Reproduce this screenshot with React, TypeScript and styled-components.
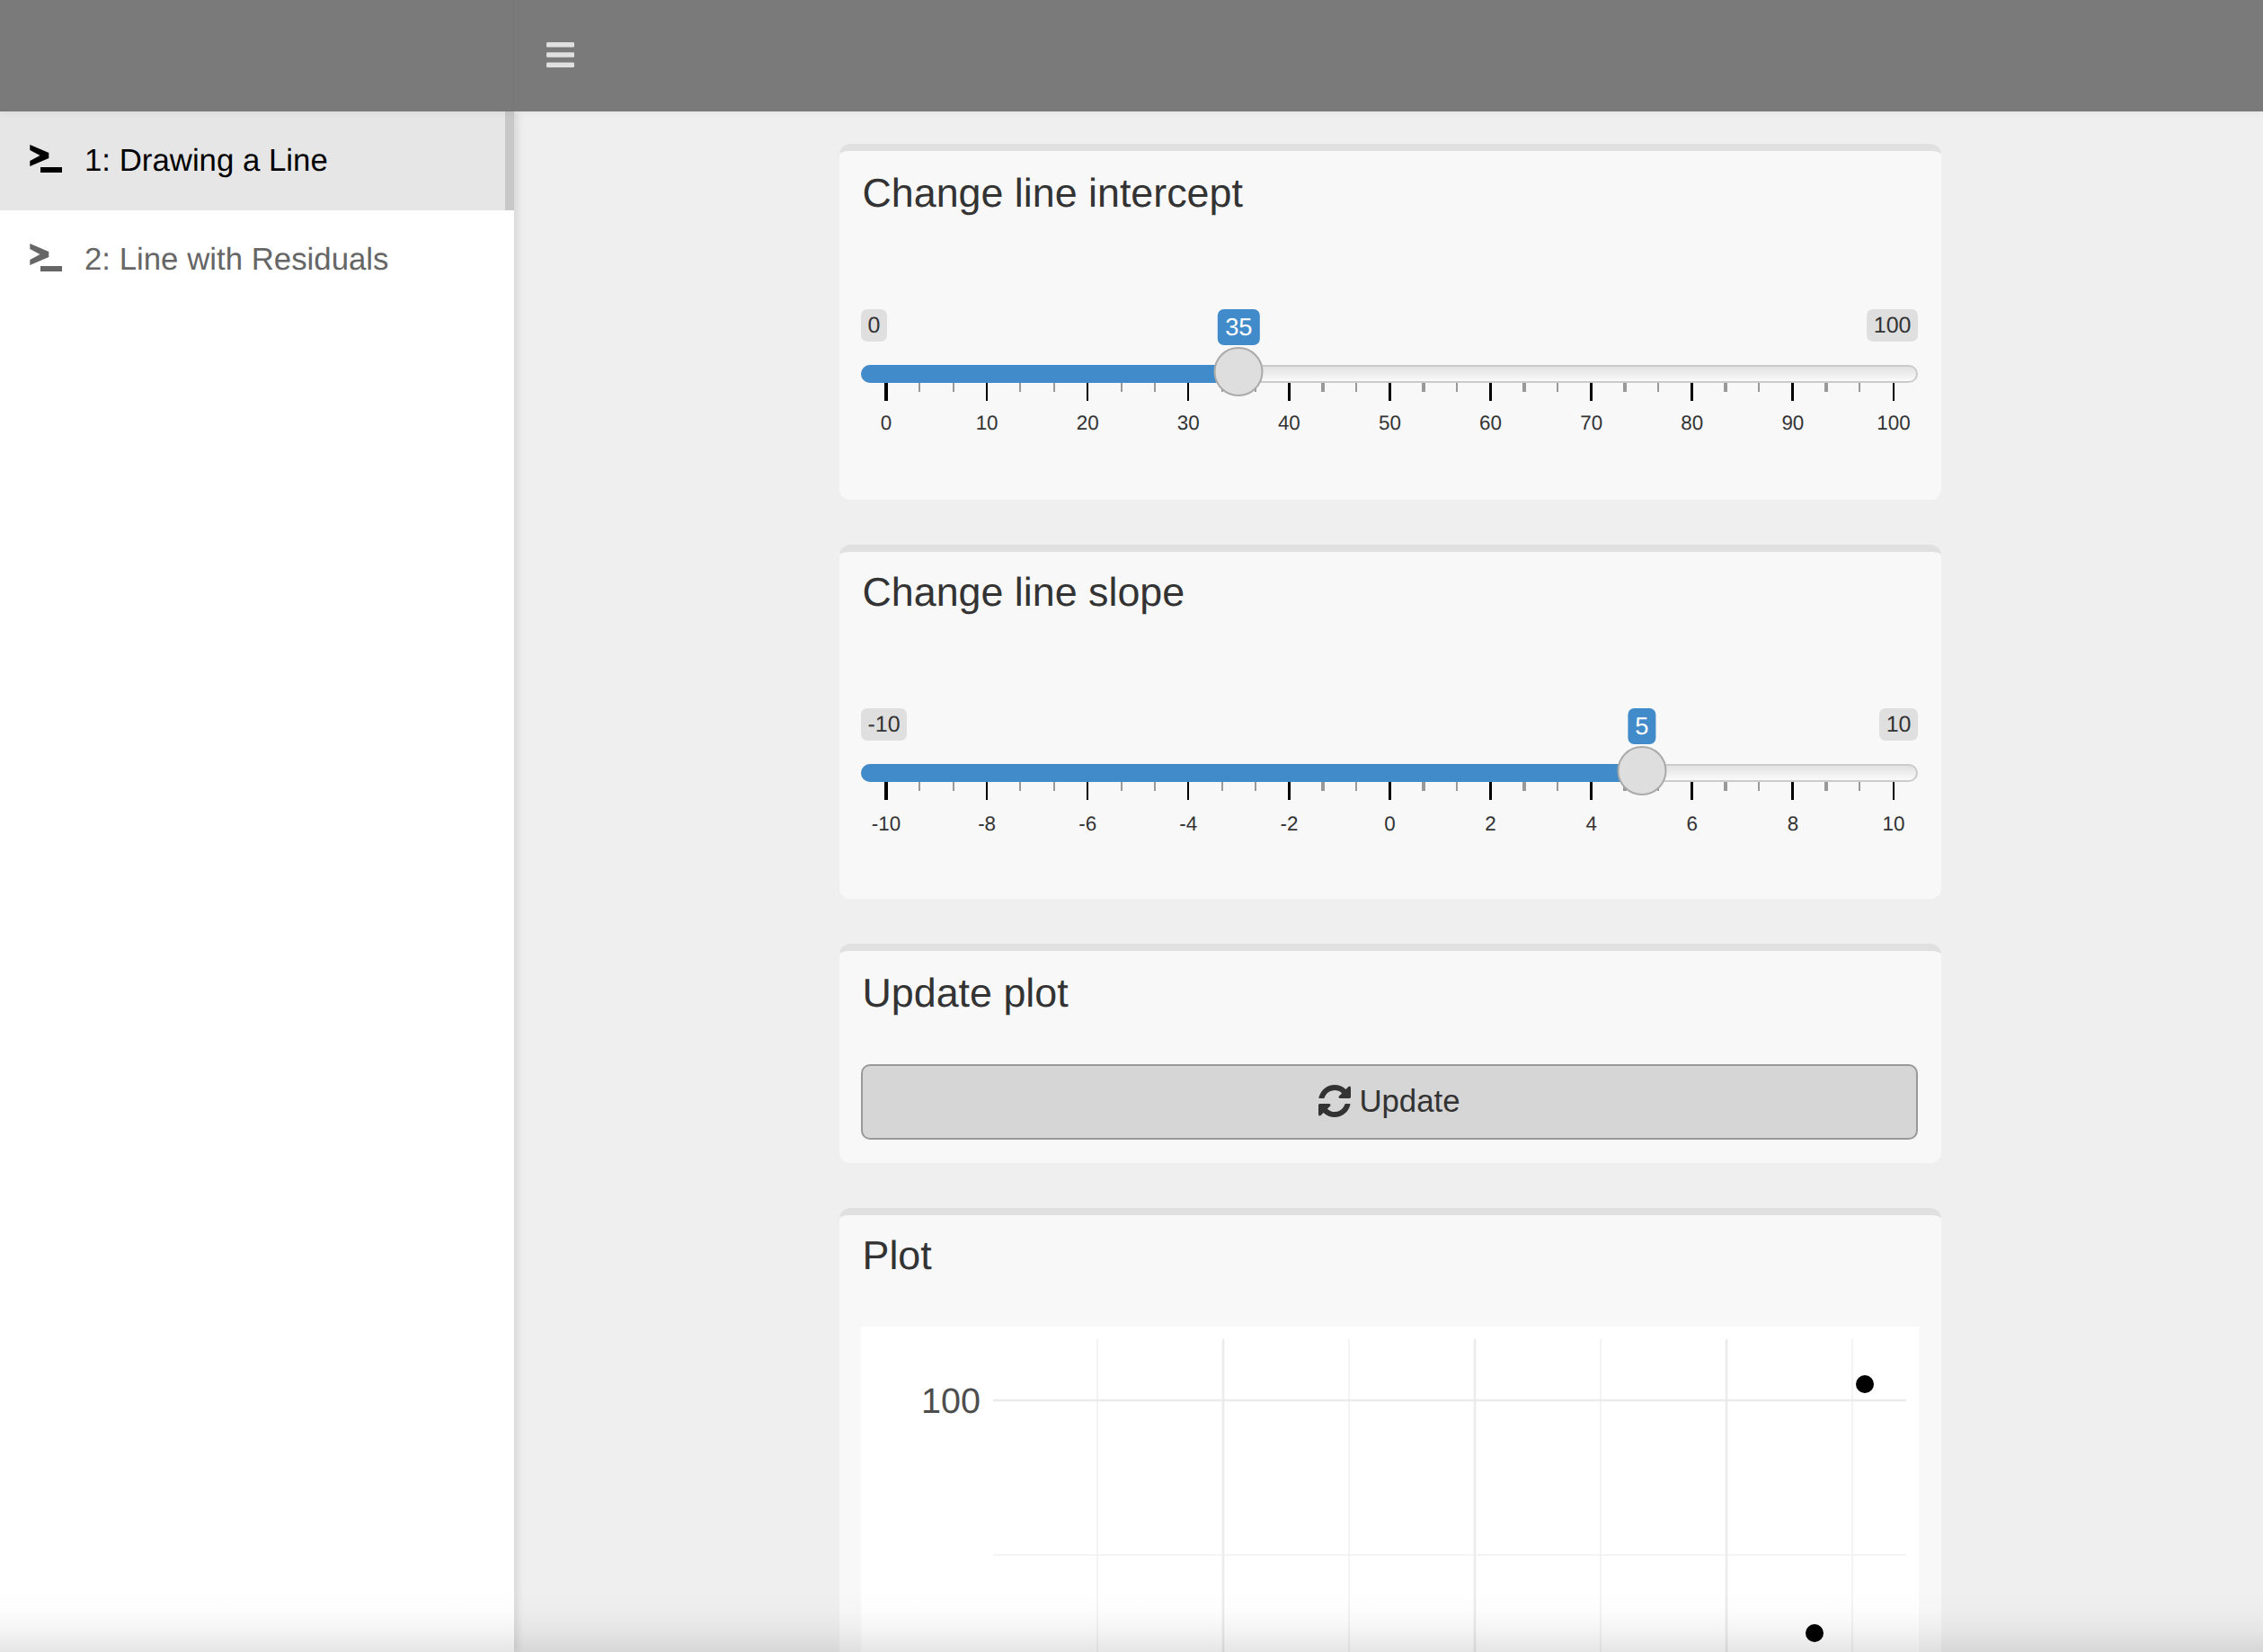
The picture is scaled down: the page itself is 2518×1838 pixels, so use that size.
import React from "react";
import styled, { createGlobalStyle } from "styled-components";

const GlobalStyle = createGlobalStyle`
  html, body {
    margin: 0;
    padding: 0;
    background: #efefef;
    font-family: "Liberation Sans", Arial, sans-serif;
    text-rendering: geometricPrecision;
  }
`;

function TerminalIcon(): React.ReactElement {
  return (
    <TerminalSvg width="36" height="31" viewBox="0 0 36 31" fill="currentColor">
      <path d="M0.3 0 L21.3 9 V15 L0.3 24 V18 L11.5 12 L0.3 6 Z" />
      <rect x="12" y="25" width="24" height="6" />
    </TerminalSvg>
  );
}

function BarsIcon(): React.ReactElement {
  return (
    <svg width="31" height="28" viewBox="0 0 31 28" fill="currentColor">
      <rect y="0" width="31" height="5.4" rx="1.2" />
      <rect y="11.3" width="31" height="5.4" rx="1.2" />
      <rect y="22.6" width="31" height="5.4" rx="1.2" />
    </svg>
  );
}

function RefreshIcon(): React.ReactElement {
  return (
    <svg width="36" height="36" viewBox="128 128 1536 1536" fill="currentColor">
      <path d="M1639 1056q0 5-1 7-64 268-268 434.5t-478 166.5q-146 0-282.5-55t-243.5-157l-129 129q-19 19-45 19t-45-19-19-45v-448q0-26 19-45t45-19h448q26 0 45 19t19 45-19 45l-137 137q71 66 161 102t187 36q134 0 250-65t186-179q11-17 53-117 8-23 30-23h192q13 0 22.5 9.5t9.5 22.5zm25-800v448q0 26-19 45t-45 19h-448q-26 0-45-19t-19-45 19-45l138-138q-148-137-349-137-134 0-250 65t-186 179q-11 17-53 117-8 23-30 23h-199q-13 0-22.5-9.5t-9.5-22.5v-7q65-268 270-434.5t480-166.5q146 0 284 55.5t245 156.5l130-129q19-19 45-19t45 19 19 45z" />
    </svg>
  );
}

interface SliderProps {
  min: number;
  max: number;
  value: number;
  step: number;
  labelGap?: number;
}

const TICKS = 31;

function Slider({ min, max, value, step, labelGap = 13 }: SliderProps): React.ReactElement {
  const pct = (value - min) / (max - min);
  const center = 28 + pct * 1121;
  const labels: number[] = [];
  for (let v = min; v <= max; v += step) labels.push(v);
  return (
    <SliderBox>
      <BadgeRow>
        <EndBadge>{min}</EndBadge>
        <EndBadge>{max}</EndBadge>
      </BadgeRow>
      <ValueBadge style={{ left: center }}>{value}</ValueBadge>
      <Track>
        <Fill style={{ width: center }} />
      </Track>
      <Thumb style={{ left: center }} />
      <TickRow>
        {Array.from({ length: TICKS }, (_, i) => (
          <TickCell key={i}>
            <Tick $major={i % 3 === 0} $first={i === 0} $wide={i % 3 === 1 && i >= 13} />
          </TickCell>
        ))}
      </TickRow>
      <LabelRow $gap={labelGap}>
        {labels.map((l) => (
          <TickLabel key={l}>{l}</TickLabel>
        ))}
      </LabelRow>
    </SliderBox>
  );
}

function PlotArea(): React.ReactElement {
  const major = [403, 683, 963];
  const minor = [263, 543, 823, 1103];
  return (
    <PlotSvg width="1177" height="420" viewBox="0 0 1177 420">
      {minor.map((x) => (
        <line key={x} x1={x} x2={x} y1="14" y2="420" stroke="#f0f0f0" strokeWidth="1.6" />
      ))}
      {major.map((x) => (
        <line key={x} x1={x} x2={x} y1="14" y2="420" stroke="#ebebeb" strokeWidth="2.6" />
      ))}
      <line x1="147" x2="1163" y1="254" y2="254" stroke="#f0f0f0" strokeWidth="1.6" />
      <line x1="147" x2="1163" y1="82" y2="82" stroke="#ebebeb" strokeWidth="2.6" />
      <text x="133" y="96" textAnchor="end" fontSize="39.5" fill="#4d4d4d">
        100
      </text>
      <circle cx="1117" cy="64" r="10" fill="#000" />
      <circle cx="1061" cy="341" r="10" fill="#000" />
    </PlotSvg>
  );
}

export default function App(): React.ReactElement {
  return (
    <Page>
      <GlobalStyle />
      <Header>
        <Logo />
        <Toggle>
          <BarsIcon />
        </Toggle>
      </Header>
      <Body>
        <Sidebar>
          <NavItem $active>
            <TerminalIcon />
            <span>1: Drawing a Line</span>
          </NavItem>
          <NavItem>
            <TerminalIcon />
            <span>2: Line with Residuals</span>
          </NavItem>
        </Sidebar>
        <Content>
          <Card>
            <CardTitle>Change line intercept</CardTitle>
            <Slider min={0} max={100} value={35} step={10} />
          </Card>
          <Card $top={20}>
            <CardTitle>Change line slope</CardTitle>
            <Slider min={-10} max={10} value={5} step={2} labelGap={15} />
          </Card>
          <Card>
            <CardTitle>Update plot</CardTitle>
            <UpdateButton>
              <RefreshIcon />
              Update
            </UpdateButton>
          </Card>
          <PlotCard $top={20}>
            <CardTitle>Plot</CardTitle>
            <PlotArea />
          </PlotCard>
        </Content>
      </Body>
      <BottomFade />
    </Page>
  );
}

const Page = styled.div`
  position: relative;
  width: 2518px;
  height: 1838px;
  overflow: hidden;
  background: #efefef;
`;

const Header = styled.header`
  position: relative;
  z-index: 2;
  display: flex;
  height: 124px;
  background: #7a7a7a;
  box-shadow: 0 3px 8px rgba(0, 0, 0, 0.04);
`;

const Logo = styled.div`
  width: 572px;
  border-right: 1px solid #757575;
  box-sizing: border-box;
`;

const Toggle = styled.div`
  display: flex;
  align-items: center;
  padding-left: 36px;
  padding-bottom: 2px;
  color: #e0e0e0;
`;

const Body = styled.div`
  display: flex;
  align-items: stretch;
  height: 1714px;
`;

const Sidebar = styled.nav`
  position: relative;
  z-index: 1;
  flex: 0 0 572px;
  background: #fff;
  box-shadow: 4px 0 8px rgba(0, 0, 0, 0.1);
`;

const NavItem = styled.div<{ $active?: boolean }>`
  display: flex;
  align-items: center;
  gap: 25px;
  box-sizing: border-box;
  height: 110px;
  padding: 0 0 1px 33px;
  font-size: 34.8px;
  color: ${(p) => (p.$active ? "#000" : "#666")};
  background: ${(p) => (p.$active ? "#e6e6e6" : "#fff")};
  border-right: 10px solid ${(p) => (p.$active ? "#c8c8c8" : "#fff")};
`;

const TerminalSvg = styled.svg`
  margin-top: -4px;
`;

const Content = styled.main`
  flex: 1;
  display: flex;
  flex-direction: column;
  gap: 50px;
  padding: 36px 0 0 362px;
  width: 1226px;
  box-sizing: border-box;
`;

const Card = styled.section<{ $top?: number }>`
  width: 1226px;
  box-sizing: border-box;
  background: #f8f8f8;
  border-top: 8px solid #e0e0e0;
  border-radius: 12px;
  padding: ${(p) => p.$top ?? 22}px 26px 26px 24px;
`;

const PlotCard = styled(Card)`
  flex-shrink: 0;
`;

const CardTitle = styled.h3`
  margin: 0;
  padding-left: 1.5px;
  font-size: 44.8px;
  font-weight: 400;
  line-height: 50px;
  color: #333;
`;

const SliderBox = styled.div`
  position: relative;
  box-sizing: border-box;
  margin-top: 104px;
  height: 186px;
`;

const BadgeRow = styled.div`
  display: flex;
  justify-content: space-between;
  height: 36px;
`;

const EndBadge = styled.span`
  display: inline-flex;
  align-items: center;
  padding: 0 7.5px;
  background: #dfdfdf;
  border-radius: 7px;
  font-size: 25px;
  color: #333;
`;

const ValueBadge = styled.span`
  position: absolute;
  top: 0;
  transform: translateX(-50%);
  display: inline-flex;
  align-items: center;
  height: 40px;
  padding: 0 8px;
  background: #428bca;
  border-radius: 7px;
  font-size: 27.3px;
  color: #fff;
`;

const Track = styled.div`
  position: relative;
  height: 20px;
  margin-top: 26px;
  box-sizing: border-box;
  border: 2px solid #cbcbcb;
  border-radius: 10px;
  background: linear-gradient(to bottom, #e2e2e2, #fafafa);
`;

const Fill = styled.div`
  position: absolute;
  top: -2px;
  bottom: -2px;
  left: -2px;
  background: #428bca;
  border-radius: 10px 0 0 10px;
`;

const Thumb = styled.div`
  position: absolute;
  top: 42px;
  width: 55px;
  height: 55px;
  box-sizing: border-box;
  transform: translateX(-50%);
  background: #dedede;
  border: 2.5px solid #aaa;
  border-radius: 50%;
`;

const TickRow = styled.div`
  display: flex;
  justify-content: space-between;
  padding: 0 27px 0 28px;
  height: 20px;
`;

const TickCell = styled.div`
  width: 0;
  display: flex;
  justify-content: center;
`;

const Tick = styled.div<{ $major: boolean; $first: boolean; $wide: boolean }>`
  flex-shrink: 0;
  width: ${(p) => (p.$first ? "4px" : p.$major ? "2.5px" : p.$wide ? "4px" : "2px")};
  height: ${(p) => (p.$major ? "20px" : "10px")};
  background: ${(p) => (p.$major ? "#000" : "#999")};
`;

const LabelRow = styled.div<{ $gap: number }>`
  display: flex;
  justify-content: space-between;
  padding: 0 27px 0 28px;
  margin-top: ${(p) => p.$gap}px;
`;

const TickLabel = styled.span`
  width: 0;
  display: flex;
  justify-content: center;
  white-space: nowrap;
  font-size: 22.4px;
  line-height: 24px;
  color: #333;
`;

const UpdateButton = styled.button`
  display: flex;
  align-items: center;
  justify-content: center;
  gap: 9px;
  width: 100%;
  height: 84px;
  margin-top: 54px;
  padding: 0 0 3px;
  background: #d6d6d6;
  border: 2px solid #999;
  border-radius: 10px;
  font-family: inherit;
  font-size: 34.8px;
  color: #333;
`;

const PlotSvg = styled.svg`
  display: block;
  margin-top: 54px;
  background: #fff;
  font-family: "Liberation Sans", Arial, sans-serif;
`;

const BottomFade = styled.div`
  position: absolute;
  left: 0;
  right: 0;
  bottom: 0;
  height: 68px;
  z-index: 3;
  pointer-events: none;
  background: linear-gradient(
    to bottom,
    rgba(0, 0, 0, 0),
    rgba(0, 0, 0, 0.012) 35%,
    rgba(0, 0, 0, 0.045) 65%,
    rgba(0, 0, 0, 0.1)
  );
`;
